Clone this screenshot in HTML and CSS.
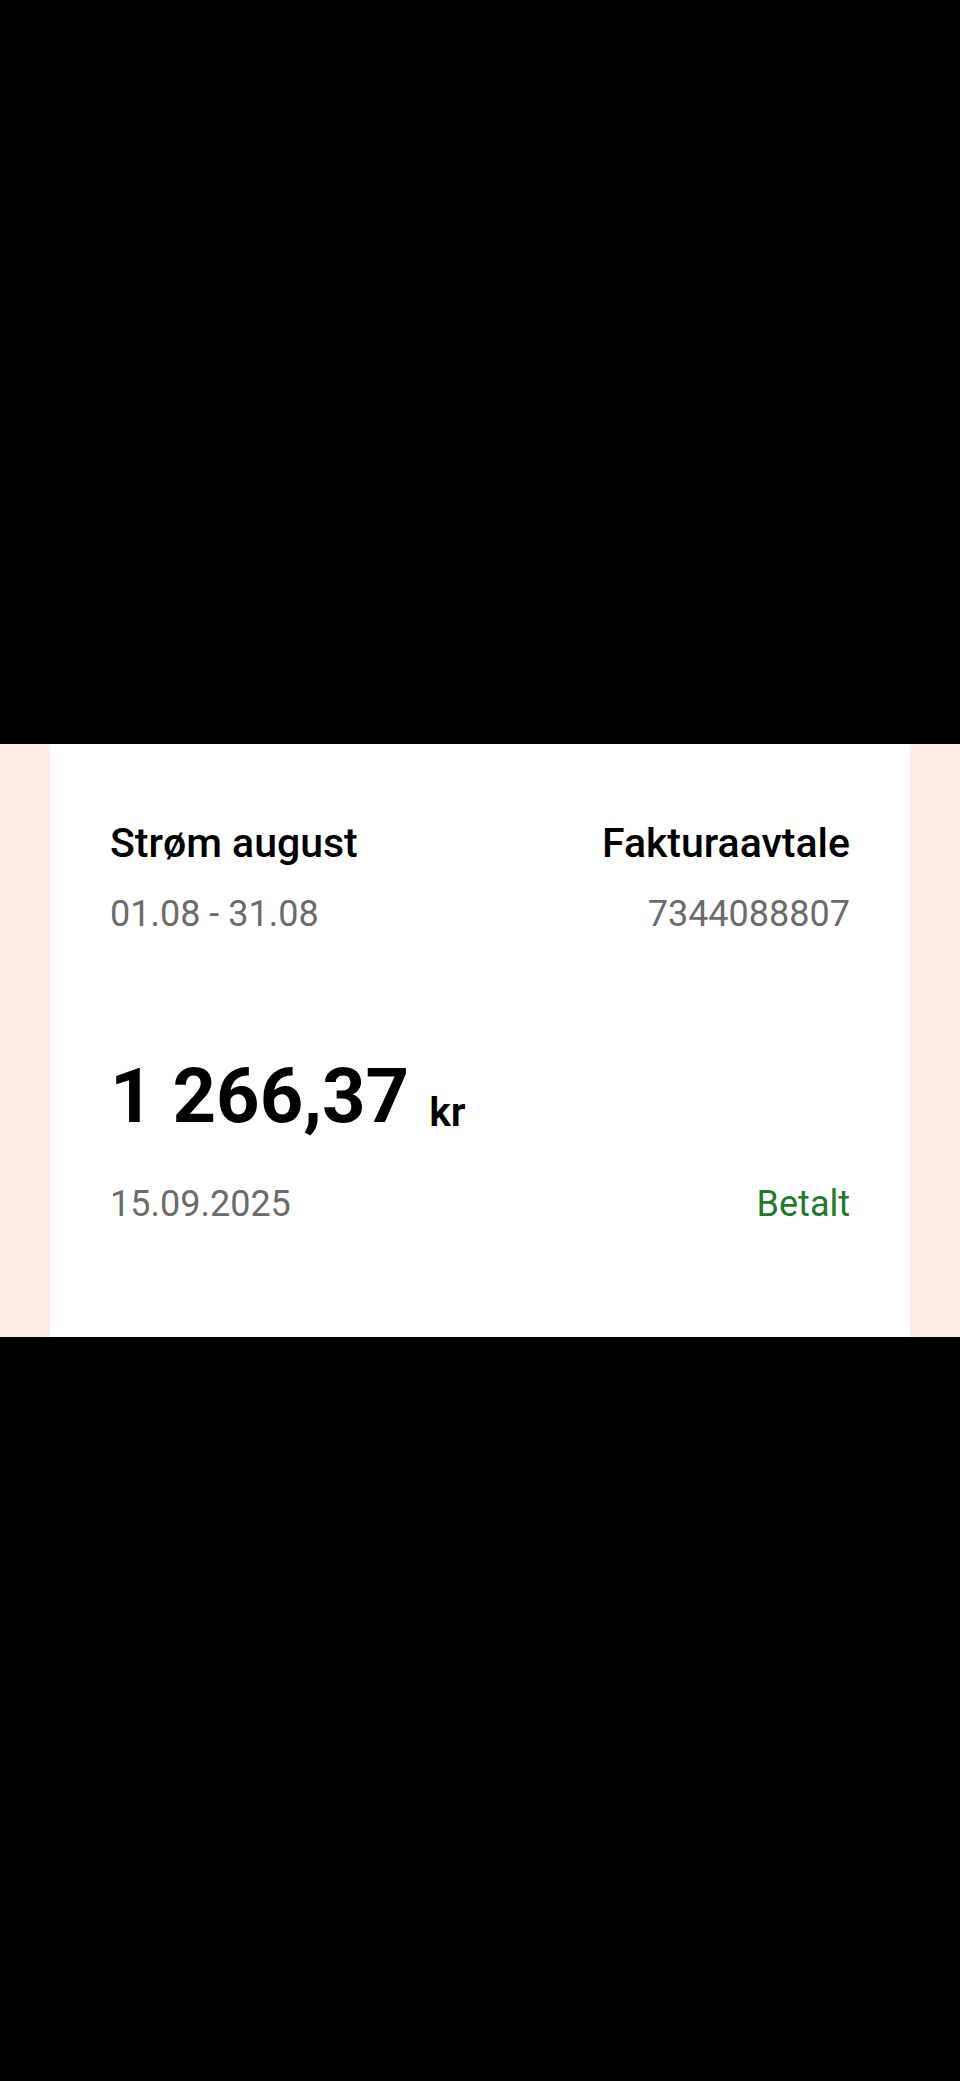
FILE: index.html
```html
<!DOCTYPE html>
<html lang="nb">
<head>
    <meta charset="UTF-8">
    <meta name="viewport" content="width=device-width, initial-scale=1.0">
    <title>Strøm august</title>
    <link rel="stylesheet" href="styles.css">
</head>
<body>
    <main class="invoice-view">
        <section class="invoice-card">
            <div class="row">
                <h1 class="title">Strøm august</h1>
                <h2 class="title">Fakturaavtale</h2>
            </div>
            <div class="row details">
                <span>01.08 - 31.08</span>
                <span>7344088807</span>
            </div>
            <p class="amount">1 266,37 <span class="currency">kr</span></p>
            <div class="row details">
                <time datetime="2025-09-15">15.09.2025</time>
                <span class="status">Betalt</span>
            </div>
        </section>
    </main>
</body>
</html>
```

FILE: styles.css
```css
body {
    margin: 0;
    min-height: 100vh;
    display: flex;
    flex-direction: column;
    justify-content: center;
    background-color: #000;
    font-family: Roboto, sans-serif;
}

.invoice-view {
    padding: 0 50px;
    background-color: #ffece4;
}

.invoice-card {
    padding: 72px 60px 109px;
    background-color: #fff;
    border-radius: 4px 4px 0 0;
}

.row {
    display: flex;
    justify-content: space-between;
    align-items: baseline;
}

.title {
    margin: 0;
    font-size: 41px;
    line-height: 54px;
    font-weight: 500;
    color: #000;
}

.details {
    margin-top: 20px;
    font-size: 36px;
    line-height: 48px;
    color: #6b6b6b;
}

.amount {
    display: flex;
    align-items: flex-end;
    gap: 20px;
    margin: 110px 0 36px;
    font-size: 76px;
    line-height: 96px;
    font-weight: 700;
    color: #000;
}

.currency {
    font-size: 41px;
    line-height: 64px;
    font-weight: 600;
}

.status {
    color: #1f7a2b;
}
```
